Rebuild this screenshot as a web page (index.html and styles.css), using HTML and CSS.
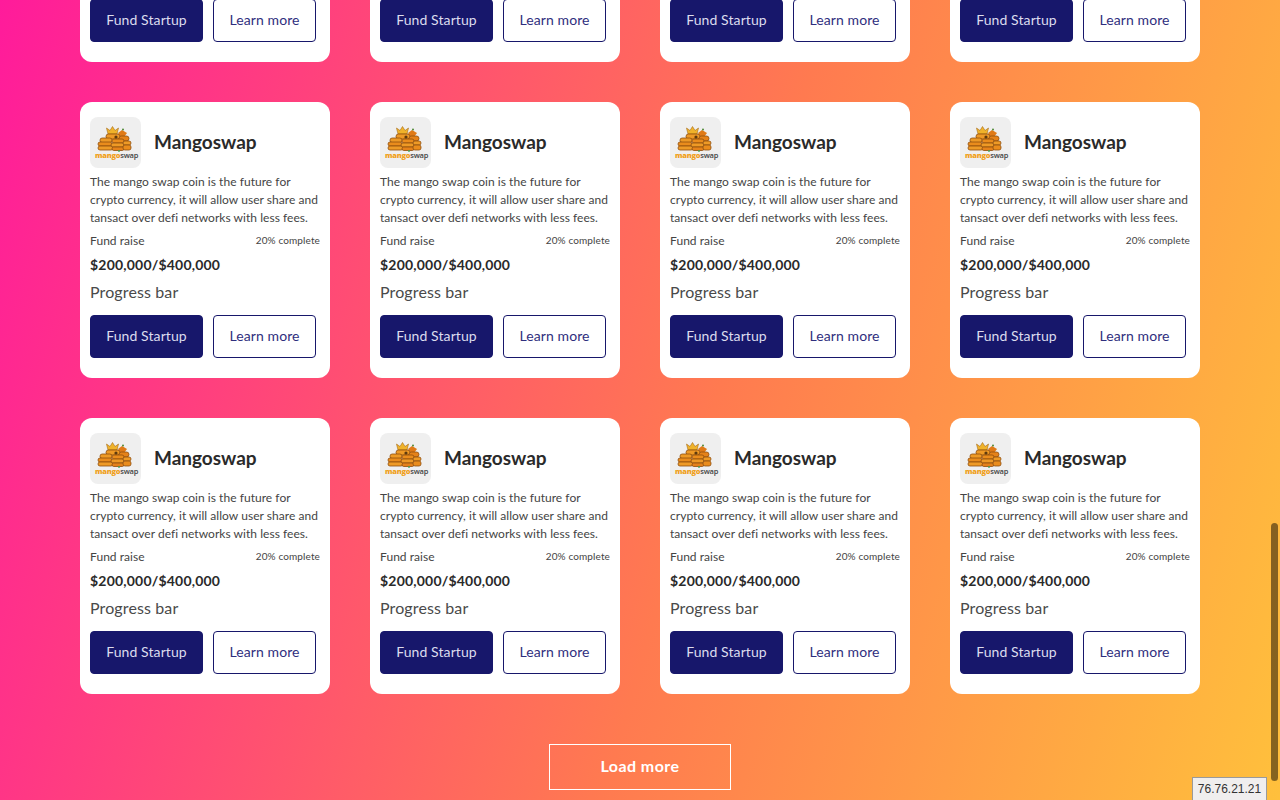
FILE: index.html
```html
<!DOCTYPE html>
<html lang="en">
<head>
<meta charset="utf-8">
<title>Startups</title>
<link rel="stylesheet" href="styles.css">
</head>
<body>
<svg class="defs" width="0" height="0" aria-hidden="true">
  <symbol id="logo" viewBox="0 0 51 51">
    <path d="M18 17l-1.500-6 3.500 2.500 2.500-4 2.500 4 3.500-2.500-1.500 6z" fill="#f0b32a" stroke="#a86c18" stroke-width=".6"/>
    <path d="M28 16l4-3 5 3-3 4-4-1z" fill="#e07a18"/>
    <circle cx="33" cy="12.500" r="1" fill="#4f8a35"/>
    <g stroke="#8f4e0e" stroke-width=".8">
      <rect x="16" y="17" width="14" height="5" rx="2.500" fill="#ee9a26"/>
      <rect x="29" y="19" width="10" height="5" rx="2.500" fill="#e5821a"/>
      <rect x="10" y="21" width="12" height="4.500" rx="2.200" fill="#ee9a26"/>
      <rect x="8" y="25" width="14" height="4" rx="2" fill="#ea8c1c"/>
      <rect x="8" y="29" width="15" height="4" rx="2" fill="#ee9a26"/>
      <rect x="22" y="22" width="12" height="4" rx="2" fill="#ea8c1c"/>
      <rect x="21" y="26" width="13" height="4" rx="2" fill="#ee9a26"/>
      <rect x="22" y="30" width="12" height="3.500" rx="1.700" fill="#e5821a"/>
      <rect x="33" y="24" width="8" height="4" rx="2" fill="#ee9a26"/>
      <rect x="33" y="28" width="8" height="5" rx="2" fill="#ea8c1c"/>
    </g>
    <circle cx="26" cy="20" r="1.600" fill="#5e3a0e"/>
    <circle cx="29" cy="34" r=".9" fill="#3fa45b"/>
  </symbol>
</svg>

<main class="page">
  <section class="grid">
    <article class="card">
      <header class="card-head"><div class="logo"><svg class="logo-art"><use href="#logo"/></svg><span class="logo-text"><b>mango</b><i>swap</i></span></div><h2>Mangoswap</h2></header>
      <p class="desc">The mango swap coin is the future for crypto currency, it will allow user share and tansact over defi networks with less fees.</p>
      <div class="meta"><span>Fund raise</span><small>20% complete</small></div>
      <p class="amount">$200,000/$400,000</p>
      <p class="progress">Progress bar</p>
      <div class="actions"><a class="btn primary">Fund Startup</a><a class="btn outline">Learn more</a></div>
    </article>
    <article class="card">
      <header class="card-head"><div class="logo"><svg class="logo-art"><use href="#logo"/></svg><span class="logo-text"><b>mango</b><i>swap</i></span></div><h2>Mangoswap</h2></header>
      <p class="desc">The mango swap coin is the future for crypto currency, it will allow user share and tansact over defi networks with less fees.</p>
      <div class="meta"><span>Fund raise</span><small>20% complete</small></div>
      <p class="amount">$200,000/$400,000</p>
      <p class="progress">Progress bar</p>
      <div class="actions"><a class="btn primary">Fund Startup</a><a class="btn outline">Learn more</a></div>
    </article>
    <article class="card">
      <header class="card-head"><div class="logo"><svg class="logo-art"><use href="#logo"/></svg><span class="logo-text"><b>mango</b><i>swap</i></span></div><h2>Mangoswap</h2></header>
      <p class="desc">The mango swap coin is the future for crypto currency, it will allow user share and tansact over defi networks with less fees.</p>
      <div class="meta"><span>Fund raise</span><small>20% complete</small></div>
      <p class="amount">$200,000/$400,000</p>
      <p class="progress">Progress bar</p>
      <div class="actions"><a class="btn primary">Fund Startup</a><a class="btn outline">Learn more</a></div>
    </article>
    <article class="card">
      <header class="card-head"><div class="logo"><svg class="logo-art"><use href="#logo"/></svg><span class="logo-text"><b>mango</b><i>swap</i></span></div><h2>Mangoswap</h2></header>
      <p class="desc">The mango swap coin is the future for crypto currency, it will allow user share and tansact over defi networks with less fees.</p>
      <div class="meta"><span>Fund raise</span><small>20% complete</small></div>
      <p class="amount">$200,000/$400,000</p>
      <p class="progress">Progress bar</p>
      <div class="actions"><a class="btn primary">Fund Startup</a><a class="btn outline">Learn more</a></div>
    </article>
    <article class="card">
      <header class="card-head"><div class="logo"><svg class="logo-art"><use href="#logo"/></svg><span class="logo-text"><b>mango</b><i>swap</i></span></div><h2>Mangoswap</h2></header>
      <p class="desc">The mango swap coin is the future for crypto currency, it will allow user share and tansact over defi networks with less fees.</p>
      <div class="meta"><span>Fund raise</span><small>20% complete</small></div>
      <p class="amount">$200,000/$400,000</p>
      <p class="progress">Progress bar</p>
      <div class="actions"><a class="btn primary">Fund Startup</a><a class="btn outline">Learn more</a></div>
    </article>
    <article class="card">
      <header class="card-head"><div class="logo"><svg class="logo-art"><use href="#logo"/></svg><span class="logo-text"><b>mango</b><i>swap</i></span></div><h2>Mangoswap</h2></header>
      <p class="desc">The mango swap coin is the future for crypto currency, it will allow user share and tansact over defi networks with less fees.</p>
      <div class="meta"><span>Fund raise</span><small>20% complete</small></div>
      <p class="amount">$200,000/$400,000</p>
      <p class="progress">Progress bar</p>
      <div class="actions"><a class="btn primary">Fund Startup</a><a class="btn outline">Learn more</a></div>
    </article>
    <article class="card">
      <header class="card-head"><div class="logo"><svg class="logo-art"><use href="#logo"/></svg><span class="logo-text"><b>mango</b><i>swap</i></span></div><h2>Mangoswap</h2></header>
      <p class="desc">The mango swap coin is the future for crypto currency, it will allow user share and tansact over defi networks with less fees.</p>
      <div class="meta"><span>Fund raise</span><small>20% complete</small></div>
      <p class="amount">$200,000/$400,000</p>
      <p class="progress">Progress bar</p>
      <div class="actions"><a class="btn primary">Fund Startup</a><a class="btn outline">Learn more</a></div>
    </article>
    <article class="card">
      <header class="card-head"><div class="logo"><svg class="logo-art"><use href="#logo"/></svg><span class="logo-text"><b>mango</b><i>swap</i></span></div><h2>Mangoswap</h2></header>
      <p class="desc">The mango swap coin is the future for crypto currency, it will allow user share and tansact over defi networks with less fees.</p>
      <div class="meta"><span>Fund raise</span><small>20% complete</small></div>
      <p class="amount">$200,000/$400,000</p>
      <p class="progress">Progress bar</p>
      <div class="actions"><a class="btn primary">Fund Startup</a><a class="btn outline">Learn more</a></div>
    </article>
    <article class="card">
      <header class="card-head"><div class="logo"><svg class="logo-art"><use href="#logo"/></svg><span class="logo-text"><b>mango</b><i>swap</i></span></div><h2>Mangoswap</h2></header>
      <p class="desc">The mango swap coin is the future for crypto currency, it will allow user share and tansact over defi networks with less fees.</p>
      <div class="meta"><span>Fund raise</span><small>20% complete</small></div>
      <p class="amount">$200,000/$400,000</p>
      <p class="progress">Progress bar</p>
      <div class="actions"><a class="btn primary">Fund Startup</a><a class="btn outline">Learn more</a></div>
    </article>
    <article class="card">
      <header class="card-head"><div class="logo"><svg class="logo-art"><use href="#logo"/></svg><span class="logo-text"><b>mango</b><i>swap</i></span></div><h2>Mangoswap</h2></header>
      <p class="desc">The mango swap coin is the future for crypto currency, it will allow user share and tansact over defi networks with less fees.</p>
      <div class="meta"><span>Fund raise</span><small>20% complete</small></div>
      <p class="amount">$200,000/$400,000</p>
      <p class="progress">Progress bar</p>
      <div class="actions"><a class="btn primary">Fund Startup</a><a class="btn outline">Learn more</a></div>
    </article>
    <article class="card">
      <header class="card-head"><div class="logo"><svg class="logo-art"><use href="#logo"/></svg><span class="logo-text"><b>mango</b><i>swap</i></span></div><h2>Mangoswap</h2></header>
      <p class="desc">The mango swap coin is the future for crypto currency, it will allow user share and tansact over defi networks with less fees.</p>
      <div class="meta"><span>Fund raise</span><small>20% complete</small></div>
      <p class="amount">$200,000/$400,000</p>
      <p class="progress">Progress bar</p>
      <div class="actions"><a class="btn primary">Fund Startup</a><a class="btn outline">Learn more</a></div>
    </article>
    <article class="card">
      <header class="card-head"><div class="logo"><svg class="logo-art"><use href="#logo"/></svg><span class="logo-text"><b>mango</b><i>swap</i></span></div><h2>Mangoswap</h2></header>
      <p class="desc">The mango swap coin is the future for crypto currency, it will allow user share and tansact over defi networks with less fees.</p>
      <div class="meta"><span>Fund raise</span><small>20% complete</small></div>
      <p class="amount">$200,000/$400,000</p>
      <p class="progress">Progress bar</p>
      <div class="actions"><a class="btn primary">Fund Startup</a><a class="btn outline">Learn more</a></div>
    </article>
  </section>
  <div class="more"><a class="load">Load more</a></div>
</main>

<div class="scrollbar"></div>
<div class="ip">76.76.21.21</div>
</body>
</html>
```

FILE: styles.css
```css
* { box-sizing: border-box; }
html, body { margin: 0; height: 800px; overflow: hidden; }
body {
  background: linear-gradient(106deg, #ff1b9b 0%, #ff7a50 55%, #ffc03c 100%);
  font-family: "Lato", "Noto Sans", sans-serif;
  color: #222;
}
.defs { position: absolute; }
.page { padding: 0 80px; margin-top: -214px; }
.grid {
  display: grid;
  grid-template-columns: repeat(4, 250px);
  gap: 40px;
}
.card {
  height: 276px;
  background: #fff;
  border-radius: 12px;
  padding: 15px 10px 0;
}
.card-head { display: flex; align-items: center; gap: 13px; height: 51px; }
.card-head h2 { margin: -2px 0 0; font-size: 19px; font-weight: 700; color: #2a2a2a; line-height: 1; letter-spacing: -.02px; }
.logo {
  position: relative;
  width: 51px;
  height: 51px;
  flex: none;
  border-radius: 8px;
  background: #efefef;
}
.logo-art { position: absolute; inset: 0; width: 51px; height: 51px; }
.logo-text {
  position: absolute;
  left: 5px;
  top: 33px;
  font-family: "Open Sans", sans-serif;
  font-size: 7.5px;
  line-height: 10px;
  letter-spacing: -.25px;
  white-space: nowrap;
}
.logo-text b { color: #f0a020; font-weight: 800; }
.logo-text i { color: #444; font-style: normal; font-weight: 600; }
.desc {
  margin: 5px 0 0;
  font-size: 12px;
  line-height: 18px;
  color: #444;
  letter-spacing: .04px;
}
.meta {
  display: flex;
  justify-content: space-between;
  align-items: center;
  margin-top: 4px;
  height: 18px;
  font-size: 12px;
  color: #444;
  letter-spacing: .05px;
}
.meta small { font-size: 10px; color: #444; letter-spacing: .12px; }
.amount { margin: 7px 0 0; font-size: 14px; line-height: 18px; font-weight: 700; color: #2a2a2a; letter-spacing: .2px; }
.progress { margin: 8px 0 0; font-size: 16px; line-height: 20px; color: #4a4a4a; letter-spacing: .12px; }
.actions { display: flex; gap: 10px; margin-top: 13px; }
.btn {
  display: flex;
  align-items: center;
  justify-content: center;
  height: 43px;
  padding-bottom: 2px;
  border-radius: 4px;
  font-size: 14px;
  letter-spacing: .1px;
  border: 1px solid #17176b;
}
.primary { width: 113px; background: #17176b; color: #dcdcee; }
.outline { width: 103px; background: #fff; color: #2f2f7e; }
.more { display: flex; justify-content: center; margin-top: 50px; }
.load {
  display: flex;
  align-items: center;
  justify-content: center;
  width: 182px;
  height: 46px;
  padding-bottom: 3px;
  border: 1px solid #fff;
  color: #fff;
  font-size: 16px;
  font-weight: 700;
  letter-spacing: .45px;
}
.scrollbar {
  position: fixed;
  top: 523px;
  right: 2px;
  width: 7px;
  height: 258px;
  border-radius: 4px;
  background: rgba(0, 0, 0, .48);
}
.ip {
  position: fixed;
  left: 1192px;
  top: 777px;
  width: 75px;
  height: 23px;
  background: #f0eeee;
  border: 1px solid #9a9a9a;
  border-bottom: 0;
  font-family: "Liberation Sans", sans-serif;
  font-size: 12px;
  line-height: 22px;
  text-align: center;
  color: #333;
}
```
